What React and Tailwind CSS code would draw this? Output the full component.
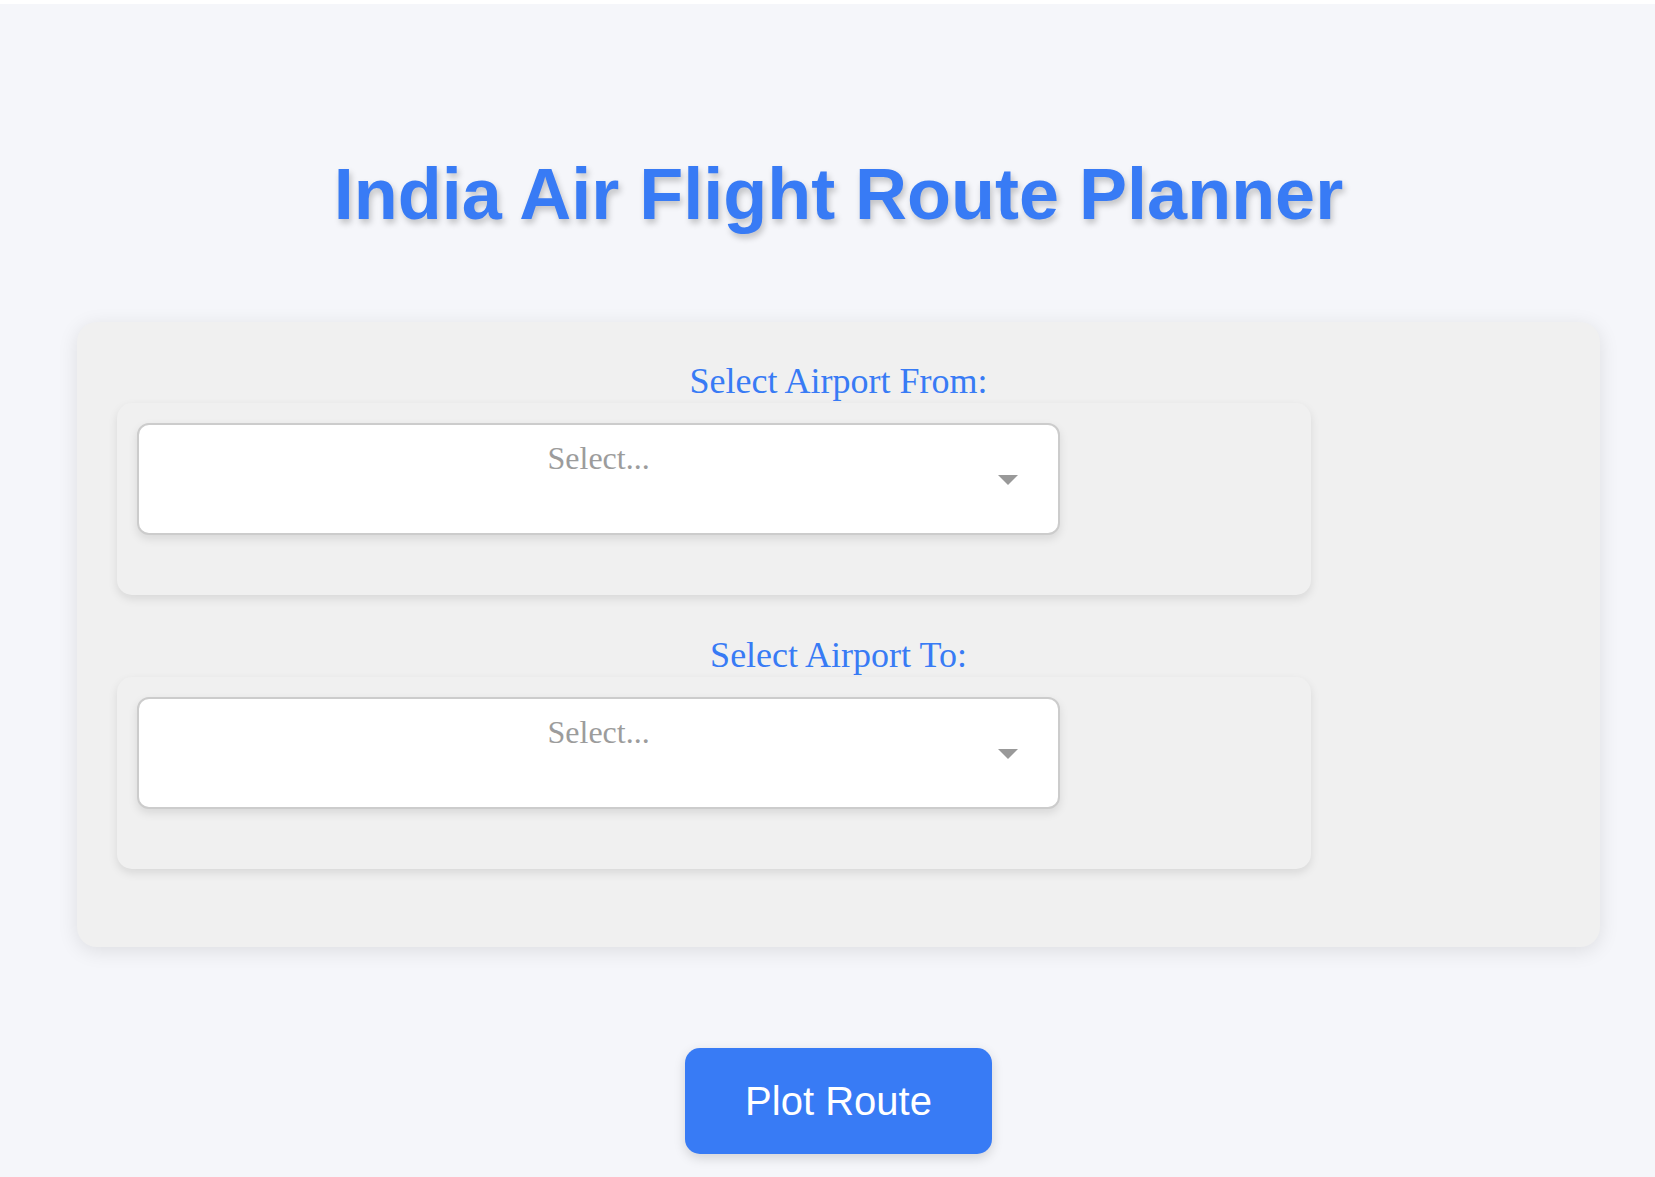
export default function App() {
  const groups = ["Select Airport From:", "Select Airport To:"];
  return (
    <div className="min-h-[1177px] bg-white">
      <div className="h-[4px] bg-white" />
      <div className="min-h-[1173px] bg-[#f5f6fa] pl-[22px] pt-[154px] pb-[20px]">
        <h1
          className="text-center text-[72px] leading-[72px] font-bold text-[#387bf5] [text-shadow:2px_4px_6px_rgba(0,0,0,0.22)]"
          style={{ fontFamily: '"Liberation Sans", Arial, sans-serif' }}
        >
          India Air Flight Route Planner
        </h1>
        <div className="mx-[55px] mt-[92px] rounded-[20px] bg-[#f0f0f0] px-[40px] pt-[41px] pb-[38px] shadow-[0_4px_20px_rgba(0,0,0,0.1)]">
          {groups.map((label, i) => (
            <div key={label} className={i === 0 ? "mb-[42px]" : "mb-[40px]"}>
              <div
                className="text-center text-[36px] leading-[36px] text-[#387bf5]"
                style={{ fontFamily: '"Liberation Serif", "Times New Roman", serif' }}
              >
                {label}
              </div>
              <div className="mt-[4px] w-[1194px] rounded-[15px] bg-[#f0f0f0] pt-[20px] px-[20px] pb-[60px] shadow-[0_4px_10px_rgba(0,0,0,0.1)]">
                <div className="relative h-[112px] w-[80%] rounded-[12px] border-2 border-[#cccccc] bg-white shadow-[0_4px_10px_rgba(0,0,0,0.1)]">
                  <div
                    className="pt-[15px] text-center text-[32px] leading-[37px] text-[#9c9c9c]"
                    style={{ fontFamily: '"Liberation Serif", "Times New Roman", serif' }}
                  >
                    Select...
                  </div>
                  <svg
                    className="absolute right-[40px] top-[50px]"
                    width="20"
                    height="11"
                    viewBox="0 0 20 11"
                  >
                    <polygon points="0,0 20,0 10,10" fill="#999999" />
                  </svg>
                </div>
              </div>
            </div>
          ))}
        </div>
        <div className="mt-[101px] flex justify-center">
          <button
            className="rounded-[15px] bg-[#387bf5] px-[60px] py-[30px] text-[40px] leading-[46px] text-white shadow-[0_4px_12px_rgba(0,0,0,0.15)]"
            style={{ fontFamily: '"Liberation Sans", Arial, sans-serif' }}
          >
            Plot Route
          </button>
        </div>
      </div>
    </div>
  );
}
